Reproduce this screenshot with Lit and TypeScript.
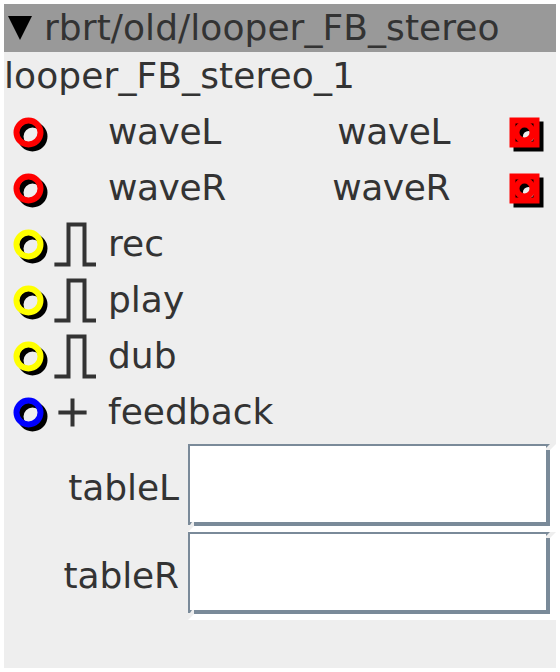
import { LitElement, html, svg, css } from "lit";
import { customElement } from "lit/decorators.js";

interface Port {
  label: string;
  color: string;
  glyph?: "pulse" | "plus";
  outlet?: string;
}

const PORTS: Port[] = [
  { label: "waveL", color: "#ff0000", outlet: "waveL" },
  { label: "waveR", color: "#ff0000", outlet: "waveR" },
  { label: "rec", color: "#ffff00", glyph: "pulse" },
  { label: "play", color: "#ffff00", glyph: "pulse" },
  { label: "dub", color: "#ffff00", glyph: "pulse" },
  { label: "feedback", color: "#0000ff", glyph: "plus" },
];

const glyphs = {
  pulse: svg`<path d="M2.4 40.5H16.5V0.5H32.5V40.5H44" transform="translate(0 8)" />`,
  plus: svg`<path d="M6.4 28.4H34.6M20.5 14.4V42.4" />`,
};

@customElement("app-root")
export class AppRoot extends LitElement {
  static styles = css`
    :host {
      display: block;
      box-sizing: border-box;
      height: 672px;
      padding: 4px;
      background: #fff;
      font: 36px/48px "DejaVu Sans", sans-serif;
      color: #333;
      white-space: nowrap;
    }
    .panel {
      height: 664px;
      background: #eee;
    }
    .title {
      display: flex;
      height: 48px;
      background: #999;
      letter-spacing: 0.06px;
    }
    .arrow {
      width: 40px;
      height: 48px;
    }
    .name {
      height: 52px;
      letter-spacing: 0.09px;
    }
    .port {
      display: flex;
      height: 56px;
      line-height: 56px;
    }
    .paired {
      letter-spacing: -0.45px;
    }
    .jack {
      width: 48px;
      height: 56px;
    }
    .glyph {
      width: 56px;
      height: 56px;
      fill: none;
      stroke: #333;
      stroke-width: 4;
    }
    .out {
      margin-left: auto;
      margin-right: 52.5px;
    }
    .port .outjack {
      width: 54px;
      height: 56px;
      margin-left: -0.5px;
    }
    .table {
      display: grid;
      grid-template-columns: 175px 368px;
      column-gap: 9px;
      height: 88px;
      line-height: 88px;
      text-align: right;
      letter-spacing: -0.1px;
    }
    .tables {
      padding-top: 4px;
    }
    .field {
      width: 368px;
      height: 88px;
    }
  `;

  private inlet(color: string) {
    return html`<svg class="jack" viewBox="0 0 48 56" fill="none" stroke-width="6">
      <circle cx="28.5" cy="32.5" r="12" stroke="#000" />
      <circle cx="24.5" cy="28.5" r="12" stroke=${color} />
    </svg>`;
  }

  private outlet() {
    return html`<svg class="outjack" viewBox="0 0 54 56">
      <rect x="11.5" y="17.5" width="30" height="30" />
      <circle cx="26.5" cy="32.5" r="5.6" fill="#eee" />
      <g fill="none" stroke="#f00" stroke-width="6">
        <rect x="10.5" y="16.5" width="24" height="24" />
        <circle cx="22.5" cy="28.5" r="8" />
      </g>
    </svg>`;
  }

  private port(p: Port) {
    return html`<div class="port ${p.outlet ? "paired" : ""}">
      ${this.inlet(p.color)}
      <svg class="glyph" viewBox="0 0 56 56">${p.glyph ? glyphs[p.glyph] : ""}</svg>
      <span>${p.label}</span>
      ${p.outlet ? html`<span class="out">${p.outlet}</span>${this.outlet()}` : ""}
    </div>`;
  }

  private table(label: string) {
    return html`<div class="table">
      <span>${label}</span>
      <svg class="field" viewBox="0 0 368 88">
        <rect width="368" height="88" fill="#fff" />
        <path d="M0 0H362V82H0ZM2 2V78H358V2Z" fill="#7a8a99" fill-rule="evenodd" />
        <path d="M0 81H2L4 78H6V82L0 88ZM368 0L362 6H358V4L362 0Z" fill="#eee" />
      </svg>
    </div>`;
  }

  render() {
    return html`<div class="panel">
      <div class="title">
        <svg class="arrow" viewBox="0 0 40 48"><path d="M4 12H28L16 36Z" /></svg>
        <span>rbrt/old/looper_FB_stereo</span>
      </div>
      <div class="name">looper_FB_stereo_1</div>
      ${PORTS.map((p) => this.port(p))}
      <div class="tables">${["tableL", "tableR"].map((t) => this.table(t))}</div>
    </div>`;
  }
}
